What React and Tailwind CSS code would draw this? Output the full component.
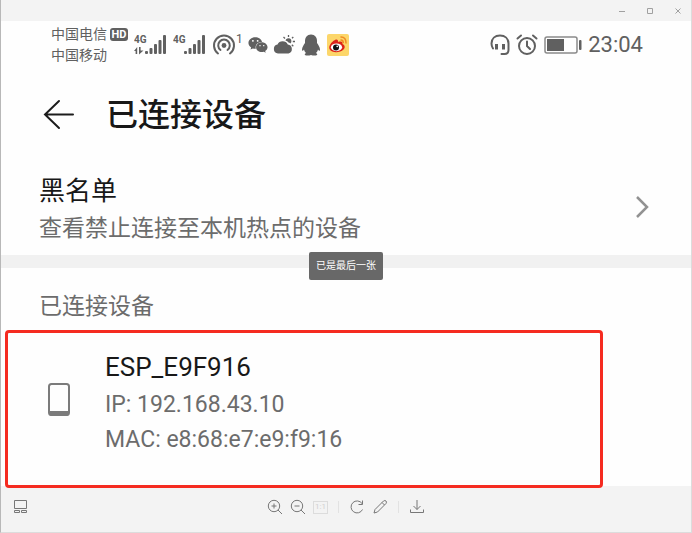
import { FaWeixin } from "react-icons/fa";

const device = {
  name: "ESP_E9F916",
  ip: "192.168.43.10",
  mac: "e8:68:e7:e9:f9:16",
};

function Signal({ data }) {
  return (
    <svg width="34" height="22" viewBox="0 0 34 22" fill="#606060">
      <text x="0" y="9" fontSize="10" fontWeight="700" fontFamily="Roboto, sans-serif">
        4G
      </text>
      {data && <path d="M0 17 3.2 13V20H1.6V17ZM5 13H6.6V16.5H9.5L5 20.5Z" />}
      <rect x="11" y="17" width="3" height="3" rx="1" />
      <rect x="15.5" y="14" width="3" height="6" rx="1" />
      <rect x="20" y="10" width="3" height="10" rx="1" />
      <rect x="24.5" y="6" width="3" height="14" rx="1" />
      <rect x="29" y="1" width="3" height="19" rx="1" />
    </svg>
  );
}

function HotspotIcon() {
  return (
    <svg width="24" height="22" viewBox="0 0 24 22" fill="none" stroke="#606060" strokeWidth="2" strokeLinecap="round">
      <circle cx="12" cy="11.5" r="2.4" fill="#606060" stroke="none" />
      <path d="M8.5 16A5.8 5.8 0 1 1 15.5 16" />
      <path d="M6 19.5A10 10 0 1 1 18 19.5" />
    </svg>
  );
}

function WeatherIcon() {
  return (
    <svg width="22" height="20" viewBox="0 0 22 20" fill="#606060">
      <path d="M5 18.5A4.5 4.5 0 0 1 4.5 9.6 5.7 5.7 0 0 1 14.8 9.5 4.6 4.6 0 0 1 15.5 18.5Z" />
      <path d="M12.5 5.5A3 3 0 1 1 17.3 8.5Q16.5 7.7 15.5 7.5 14.5 6 12.5 5.5Z" />
      <path d="M15.5 0V2M10.5 2 12 3.5M20.3 2 19 3.3M19.8 6.5H22M18.8 9.8 20.3 11.2" stroke="#606060" strokeWidth="1.3" />
    </svg>
  );
}

function PenguinIcon() {
  return (
    <svg width="20" height="22" viewBox="0 0 20 22" fill="#606060" className="mx-px">
      <path d="M10 .5C6 .5 4 3.5 4 7V9C3 10.5 1 13 1 15.5 1 17.5 2 17 3 15.5 3.3 17 4 18 5 19 3 20 3.5 21.5 6 21.5 8 21.5 9 21.5 10 21 11 21.5 12 21.5 14 21.5 16.5 21.5 17 20 15 19 16 18 16.7 17 17 15.5 18 17 19 17.5 19 15.5 19 13 17 10.5 16 9V7C16 3.5 14 .5 10 .5Z" />
    </svg>
  );
}

function WeiboIcon() {
  return (
    <svg width="22" height="22" viewBox="0 0 22 22" fill="none">
      <rect width="22" height="22" rx="2" fill="#fcd66a" />
      <path d="M8 6C10 5 11.5 6 11 8 14 7 16 7.5 15.5 10 18 11 18.5 13.5 16.5 15.5 13 19 5 19 2.8 15.5 1 12.5 4 8 8 6Z" fill="#dc2318" />
      <ellipse cx="9.5" cy="13.3" rx="5.6" ry="3.9" fill="#fff" />
      <circle cx="9" cy="13.4" r="3" fill="#111" />
      <circle cx="10.2" cy="12.4" r=".8" fill="#fff" />
      <path d="M14 3Q19 3 19 9M14 6Q16 6 16.3 8.5" stroke="#f08a24" strokeWidth="1.5" strokeLinecap="round" />
    </svg>
  );
}

function HeadsetIcon() {
  return (
    <svg width="20" height="22" viewBox="0 0 20 22" fill="none" stroke="#606060" strokeWidth="2" strokeLinecap="round">
      <path d="M3 14.5C2 13 1.5 11.5 1.5 9.5 1.5 4.5 5 1.5 10 1.5S18.500 4.5 18.5 9.5V16C18.5 18.5 17 20 14.5 20H11.500" />
      <path d="M6.5 10V15.5M13.5 10V15.5" strokeWidth="3" strokeLinecap="butt" />
    </svg>
  );
}

function AlarmIcon() {
  return (
    <svg width="22" height="22" viewBox="0 0 22 22" fill="none" stroke="#606060" strokeWidth="2" strokeLinecap="round">
      <circle cx="11" cy="12" r="8" />
      <path d="M11 7.5V12L14 15M1.5 4.5 5 1.5M20.5 4.5 17 1.5" />
    </svg>
  );
}

function BatteryIcon() {
  return (
    <svg width="38" height="18" viewBox="0 0 38 18" fill="none">
      <rect x="1" y="1" width="32" height="16" rx="2" stroke="#8a8a8a" strokeWidth="1.5" />
      <rect x="3" y="3" width="17" height="12" fill="#606060" />
      <rect x="35" y="4" width="2.5" height="10" rx="1" fill="#606060" />
    </svg>
  );
}

function TitleBar() {
  return (
    <header className="flex h-[21px] shrink-0 items-center justify-end gap-4 bg-[#f3f3f3] pr-[7px] text-[#a0a0a0]">
      <button aria-label="最小化" className="size-3">
        <svg viewBox="0 0 12 12" stroke="currentColor"><path d="M3 6.5H9" /></svg>
      </button>
      <button aria-label="最大化" className="size-3">
        <svg viewBox="0 0 12 12" fill="none" stroke="currentColor"><path d="M3.5 3.5H8.5V8.5H3.5Z" /></svg>
      </button>
      <button aria-label="关闭" className="size-3">
        <svg viewBox="0 0 12 12" stroke="currentColor"><path d="M3.5 3.5 8.5 8.5M8.5 3.5 3.5 8.5" /></svg>
      </button>
    </header>
  );
}

function StatusBar() {
  return (
    <div className="flex h-12 items-center justify-between pr-12 pl-[50px] text-[#606060]">
      <div className="flex items-center">
        <div className="mr-1.5 text-sm leading-[21px]">
          <div className="flex items-center gap-[3px]">
            中国电信
            <span className="flex h-[13px] w-[18px] items-center justify-center rounded-[3px] bg-[#606060] text-[11px] font-bold text-white">
              HD
            </span>
          </div>
          <div>中国移动</div>
        </div>
        <div className="flex items-center gap-[5px]">
          <Signal data />
          <Signal />
          <div className="flex items-center">
            <HotspotIcon />
            <span className="mb-3 text-xs leading-3">1</span>
          </div>
          <FaWeixin size={20} />
          <WeatherIcon />
          <PenguinIcon />
          <WeiboIcon />
        </div>
      </div>
      <div className="flex items-center gap-1.5">
        <HeadsetIcon />
        <AlarmIcon />
        <BatteryIcon />
        <time className="text-[22px] leading-6">23:04</time>
      </div>
    </div>
  );
}

function Toolbar() {
  return (
    <footer className="flex h-[46px] shrink-0 items-center bg-[#f3f3f3] px-[11px] pb-1 text-[#777]">
      <div className="flex-1">
        <button aria-label="缩略图" className="block size-4">
          <svg viewBox="0 0 16 16" fill="none" stroke="currentColor">
            <path d="M2.5 1.5H14.5V9.5H2.5ZM2.5 11.5H7.5V13.5H2.5ZM9.5 11.5H14.5V13.5H9.5Z" />
          </svg>
        </button>
      </div>
      <div className="flex items-center gap-[7px]">
        <button aria-label="放大" className="size-4">
          <svg viewBox="0 0 16 16" fill="none" stroke="currentColor">
            <circle cx="7" cy="7" r="5.7" />
            <path d="M11 11 15 15M4.5 7H9.5M7 4.5V9.5" />
          </svg>
        </button>
        <button aria-label="缩小" className="size-4">
          <svg viewBox="0 0 16 16" fill="none" stroke="currentColor">
            <circle cx="7" cy="7" r="5.7" />
            <path d="M11 11 15 15M4.5 7H9.5" />
          </svg>
        </button>
        <button
          disabled
          aria-label="实际大小"
          className="flex h-[13px] w-[15px] items-center justify-center border border-[#dcdcdc] text-[8px] text-[#d0d0d0]"
        >
          1:1
        </button>
        <span className="mx-[3px] h-3 w-px bg-[#e2e2e2]" />
        <button aria-label="旋转" className="size-4">
          <svg viewBox="0 0 16 16" fill="none" stroke="currentColor">
            <path d="M13.5 10.5A6 6 0 1 1 13 4.5M13.5 1.5V5.5H9.5" />
          </svg>
        </button>
        <button aria-label="编辑" className="size-4">
          <svg viewBox="0 0 16 16" fill="none" stroke="currentColor" strokeLinejoin="round">
            <path d="M2 14 3 10.5 11.5 2Q13 1 14 2 15 3 14 4.5L5.5 13ZM10 3.5 12.5 6" />
          </svg>
        </button>
        <span className="mx-[3px] h-3 w-px bg-[#e2e2e2]" />
        <button aria-label="下载" className="size-4">
          <svg viewBox="0 0 16 16" fill="none" stroke="currentColor">
            <path d="M8 1V10.5M4.5 7 8 10.5 11.5 7M1.5 10.5V13.5H14.5V10.5" />
          </svg>
        </button>
      </div>
      <div className="flex-1" />
    </footer>
  );
}

export default function App() {
  return (
    <div className="relative flex min-h-screen flex-col border-r border-b border-l border-[#dcdcdc] border-l-[#b8b8b8] bg-[#fefefe] font-['Roboto','Noto_Sans_CJK_SC',sans-serif]">
      <TitleBar />

      <main className="flex flex-1 flex-col">
        <StatusBar />

        <div className="flex items-center gap-8 pt-[22px] pl-[41px]">
          <button aria-label="返回" className="size-8">
            <svg viewBox="0 0 32 32" fill="none" stroke="#1c1c1c" strokeWidth="2" strokeLinecap="round">
              <path d="M3 15.5H31M17 2 3 15.5 17 29" />
            </svg>
          </button>
          <h1 className="text-[32px] leading-12 font-medium text-[#181818]">已连接设备</h1>
        </div>

        <a href="#blacklist" className="flex items-center justify-between pt-8 pr-[42px] pb-2 pl-[38px]">
          <div>
            <h2 className="text-[26px] leading-10 text-[#181818]">黑名单</h2>
            <p className="text-[23px] leading-9 text-[#6c6c6c]">查看禁止连接至本机热点的设备</p>
          </div>
          <svg width="14" height="22" viewBox="0 0 14 22" fill="none" stroke="#929292" strokeWidth="2.5" className="mb-1">
            <path d="M2 1 12 11 2 21" />
          </svg>
        </a>

        <hr className="h-[13px] shrink-0 border-0 bg-[#f1f1f1]" />

        <h2 className="pt-[21px] pb-[5px] pl-[38px] text-[23px] leading-9 text-[#6c6c6c]">已连接设备</h2>

        <section className="z-10 mr-[88px] -mb-0.5 ml-1 flex flex-1 items-start rounded-[4px] border-[3px] border-[#f52b20] pt-3.5 pb-6 pl-10">
          <svg width="22" height="34" viewBox="0 0 22 34" fill="none" className="mt-9 mr-[35px]">
            <rect x="1" y="1" width="20" height="31" rx="2.5" stroke="#7b7b7b" strokeWidth="2" />
            <path d="M1 28H21V30Q21 33 18.5 33H3.5Q1 33 1 30Z" fill="#7b7b7b" />
          </svg>
          <div className="text-[23px] leading-[35px] text-[#6c6c6c]">
            <h3 className="text-[26px] leading-10 text-[#181818]">{device.name}</h3>
            <p>IP: {device.ip}</p>
            <p>MAC: {device.mac}</p>
          </div>
        </section>
      </main>

      <Toolbar />

      <div
        role="status"
        className="absolute top-1/2 left-1/2 z-20 -translate-x-1/2 -translate-y-1/2 rounded-[2px] bg-[#686868] px-[7px] py-1.5 text-[10px] leading-4 whitespace-nowrap text-white"
      >
        已是最后一张
      </div>
    </div>
  );
}
